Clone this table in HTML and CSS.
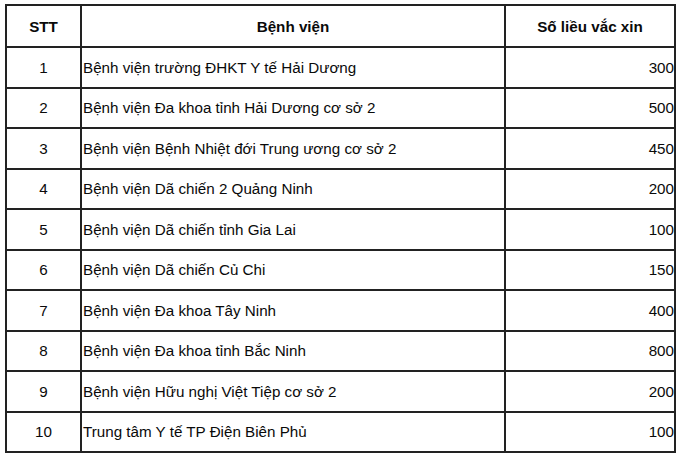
FILE: index.html
```html
<!DOCTYPE html>
<html lang="vi">
<head>
<meta charset="utf-8">
<link rel="stylesheet" href="styles.css">
</head>
<body>
<table class="vaccine-table">
  <colgroup>
    <col class="col-stt">
    <col class="col-name">
    <col class="col-dose">
  </colgroup>
  <thead>
    <tr class="head-row">
      <th>STT</th>
      <th>Bệnh viện</th>
      <th>Số liều vắc xin</th>
    </tr>
  </thead>
  <tbody>
    <tr><td class="stt">1</td><td class="name">Bệnh viện trường ĐHKT Y tế Hải Dương</td><td class="dose">300</td></tr>
    <tr><td class="stt">2</td><td class="name">Bệnh viện Đa khoa tỉnh Hải Dương cơ sở 2</td><td class="dose">500</td></tr>
    <tr><td class="stt">3</td><td class="name">Bệnh viện Bệnh Nhiệt đới Trung ương cơ sở 2</td><td class="dose">450</td></tr>
    <tr><td class="stt">4</td><td class="name">Bệnh viện Dã chiến 2 Quảng Ninh</td><td class="dose">200</td></tr>
    <tr><td class="stt">5</td><td class="name">Bệnh viện Dã chiến tỉnh Gia Lai</td><td class="dose">100</td></tr>
    <tr><td class="stt">6</td><td class="name">Bệnh viện Dã chiến Củ Chi</td><td class="dose">150</td></tr>
    <tr><td class="stt">7</td><td class="name">Bệnh viện Đa khoa Tây Ninh</td><td class="dose">400</td></tr>
    <tr><td class="stt">8</td><td class="name">Bệnh viện Đa khoa tỉnh Bắc Ninh</td><td class="dose">800</td></tr>
    <tr><td class="stt">9</td><td class="name">Bệnh viện Hữu nghị Việt Tiệp cơ sở 2</td><td class="dose">200</td></tr>
    <tr><td class="stt">10</td><td class="name">Trung tâm Y tế TP Điện Biên Phủ</td><td class="dose">100</td></tr>
  </tbody>
</table>
</body>
</html>
```
FILE: styles.css
```css
html, body {
  margin: 0;
  padding: 0;
  background: #ffffff;
}
body {
  padding: 4px 0 0 5px;
  font-family: "Liberation Sans", Arial, sans-serif;
  color: #0a0a0a;
}
.vaccine-table {
  border-collapse: collapse;
  table-layout: fixed;
  width: 671px;
  font-size: 15.2px;
}
.col-stt { width: 75px; }
.col-name { width: 424px; }
.col-dose { width: 170px; }
.vaccine-table th,
.vaccine-table td {
  border: 2px solid #222222;
  padding: 0 2px;
  vertical-align: middle;
  white-space: nowrap;
}
.head-row th {
  height: 40px;
  font-weight: bold;
  text-align: center;
}
.vaccine-table td {
  height: 38.5px;
}
.stt { text-align: center; }
.name { text-align: left; }
.vaccine-table td.name { padding-left: 1px; }
.dose { text-align: right; }
.vaccine-table td.dose { padding-right: 0; }
```
